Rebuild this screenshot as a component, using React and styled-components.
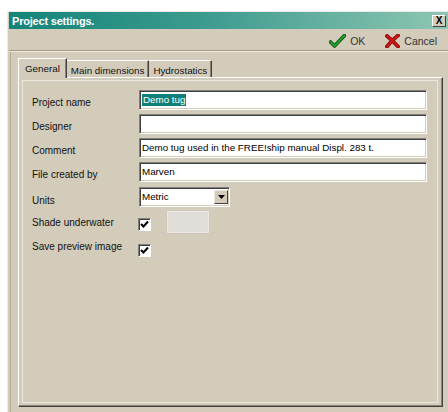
import React from "react";
import styled, { createGlobalStyle } from "styled-components";

const Global = createGlobalStyle`
  html, body {
    margin: 0;
    padding: 0;
    background: #ffffff;
    overflow: hidden;
  }
  body {
    font-family: "Liberation Sans", Arial, sans-serif;
    font-size: 10px;
    color: #000;
  }
`;

const Page = styled.div`
  width: 448px;
  height: 412px;
  padding: 11px 0 0 7px;
  box-sizing: border-box;
`;

const Window = styled.div`
  height: 401px;
  background: #d4ccbb;
  border-left: 1px solid #eeebe4;
  border-top: 1px solid #eeebe4;
  padding-left: 1px;
  display: flex;
  flex-direction: column;
  box-sizing: border-box;
`;

const TitleBar = styled.div`
  height: 17px;
  flex: none;
  display: flex;
  align-items: center;
  justify-content: space-between;
  background: linear-gradient(90deg, #138479 0%, #3d9b8f 45%, #8ec6b2 100%);
  padding: 0 2px 0 3px;
`;

const Title = styled.span`
  color: #fff;
  font-weight: bold;
  font-size: 11px;
  letter-spacing: -0.2px;
`;

const CloseBox = styled.div`
  width: 14px;
  height: 12px;
  background: #d4ccbb;
  border-top: 1px solid #fff;
  border-left: 1px solid #fff;
  border-right: 1px solid #404040;
  border-bottom: 1px solid #404040;
  box-sizing: border-box;
  display: flex;
  align-items: center;
  justify-content: center;
  font-weight: bold;
  font-size: 10px;
  line-height: 1;
`;

const Toolbar = styled.div`
  height: 22px;
  flex: none;
  display: flex;
  align-items: center;
  justify-content: flex-end;
  gap: 20px;
  padding-right: 11px;
  padding-top: 2px;
  box-sizing: border-box;
  border-bottom: 1px solid #a69c86;
  box-shadow: 0 1px 0 #eeebe4;
`;

const ToolButton = styled.div`
  display: flex;
  align-items: center;
  gap: 4px;
  font-size: 10.5px;
  color: #333;
`;

const Panel = styled.div`
  flex: 1;
  margin-top: 1px;
  margin-left: 1px;
  border-left: 1px solid #b7ab92;
  padding: 5px 0 0 7px;
  display: flex;
  flex-direction: column;
`;

const TabRow = styled.div`
  display: flex;
  align-items: flex-end;
  height: 20px;
  position: relative;
  z-index: 1;
`;

const Tab = styled.div`
  height: ${(p) => (p.$active ? "20px" : "17px")};
  padding: 0 ${(p) => (p.$active ? "6px" : "4px")};
  margin-bottom: ${(p) => (p.$active ? "-1px" : "0")};
  display: flex;
  align-items: center;
  box-sizing: border-box;
  background: #d4ccbb;
  border-top: 1px solid #fff;
  border-left: ${(p) => (p.$active ? "1px solid #fff" : "none")};
  border-right: 1px solid #404040;
  box-shadow: inset -1px 0 0 #8c8270;
  font-size: 9.8px;
  color: #111;
  padding-top: ${(p) => (p.$active ? "0" : "2px")};
`;

const Sheet = styled.div`
  width: 425px;
  height: 330px;
  box-sizing: border-box;
  border-top: 1px solid #fff;
  border-left: 1px solid #fff;
  border-right: 1px solid #404040;
  border-bottom: 1px solid #404040;
  box-shadow: inset -1px -1px 0 #8c8270;
  padding: 2px 4px 3px 3px;
`;

const Content = styled.div`
  height: 100%;
  box-sizing: border-box;
  border: 1px solid #ebe7df;
  padding: 9px 9px 0 9px;
`;

const Form = styled.div`
  display: grid;
  grid-template-columns: 107px 288px;
  row-gap: 4px;
`;

const Label = styled.div`
  padding-top: ${(p) => p.$top || 7}px;
  font-size: 10px;
  line-height: 12px;
  color: #111;
  white-space: nowrap;
`;

const Field = styled.div`
  height: 20px;
  box-sizing: border-box;
  background: #fff;
  border-top: 1px solid #808080;
  border-left: 1px solid #808080;
  border-right: 1px solid #fff;
  border-bottom: 1px solid #fff;
  box-shadow: inset 1px 1px 0 #404040, inset -1px -1px 0 #d4ccbb;
  padding: 3px 0 0 2px;
  font-size: 9.8px;
  line-height: 12px;
  white-space: nowrap;
  overflow: hidden;
  width: ${(p) => p.$w || "100%"};
  margin-top: ${(p) => p.$mt || 0}px;
  display: flex;
  align-items: flex-start;
  justify-content: space-between;
`;

const Selected = styled.span`
  background: #107f77;
  color: #fff;
  padding: 0 1px;
`;

const DropButton = styled.div`
  width: 14px;
  height: 14px;
  margin-top: -1px;
  margin-right: 1px;
  background: #d4ccbb;
  border-top: 1px solid #ece9e2;
  border-left: 1px solid #ece9e2;
  border-right: 1px solid #404040;
  border-bottom: 1px solid #404040;
  box-sizing: border-box;
  display: flex;
  align-items: center;
  justify-content: center;
`;

const CheckRow = styled.div`
  display: flex;
  align-items: center;
  gap: 16px;
  height: ${(p) => p.$h || 20}px;
`;

const CheckBox = styled.div`
  width: 13px;
  height: 13px;
  box-sizing: border-box;
  background: #fff;
  border-top: 1px solid #808080;
  border-left: 1px solid #808080;
  border-right: 1px solid #fff;
  border-bottom: 1px solid #fff;
  box-shadow: inset 1px 1px 0 #404040;
  display: flex;
  align-items: center;
  justify-content: center;
  margin-left: -1px;
  margin-top: ${(p) => p.$mt || 0}px;
`;

const Swatch = styled.div`
  width: 42px;
  height: 22px;
  box-sizing: border-box;
  background: #e0ddd8;
  border: 1px solid #ece9e4;
  outline: 1px solid #cfc8ba;
`;

const Tick = () => (
  <svg width="9" height="9" viewBox="0 0 9 9">
    <path d="M1 4 L3.5 6.5 L8 1.5" stroke="#000" strokeWidth="2" fill="none" />
  </svg>
);

const OkIcon = () => (
  <svg width="17" height="14" viewBox="0 0 17 14">
    <path d="M1.5 8 L5.5 12 L15.5 1.5" stroke="#0d4e18" strokeWidth="3.6" fill="none" strokeLinejoin="round" strokeLinecap="round" />
    <path d="M1.5 8 L5.5 12 L15.5 1.5" stroke="#1fa12a" strokeWidth="2" fill="none" strokeLinejoin="round" strokeLinecap="round" />
  </svg>
);

const CancelIcon = () => (
  <svg width="15" height="14" viewBox="0 0 15 14">
    <path d="M2 2 Q7 6 13 12.5 M13 1.5 Q7 6 2 12.5" stroke="#7a0a0a" strokeWidth="3.8" fill="none" strokeLinecap="round" />
    <path d="M2 2 Q7 6 13 12.5 M13 1.5 Q7 6 2 12.5" stroke="#d21414" strokeWidth="2.2" fill="none" strokeLinecap="round" />
  </svg>
);

const Arrow = () => (
  <svg width="7" height="4" viewBox="0 0 7 4">
    <path d="M0 0 H7 L3.5 4 Z" fill="#000" />
  </svg>
);

export default function App() {
  return (
    <Page>
      <Global />
      <Window>
        <TitleBar>
          <Title>Project settings.</Title>
          <CloseBox>X</CloseBox>
        </TitleBar>
        <Toolbar>
          <ToolButton>
            <OkIcon />
            OK
          </ToolButton>
          <ToolButton>
            <CancelIcon />
            Cancel
          </ToolButton>
        </Toolbar>
        <Panel>
          <TabRow>
            <Tab $active>General</Tab>
            <Tab>Main dimensions</Tab>
            <Tab>Hydrostatics</Tab>
          </TabRow>
          <Sheet>
            <Content>
              <Form>
                <Label>Project name</Label>
                <Field>
                  <Selected>Demo tug</Selected>
                </Field>
                <Label>Designer</Label>
                <Field />
                <Label>Comment</Label>
                <Field>Demo tug used in the FREE!ship manual Displ. 283 t.</Field>
                <Label>File created by</Label>
                <Field>Marven</Field>
                <Label $top={9}>Units</Label>
                <Field $w="91px" $mt={1}>
                  Metric
                  <DropButton>
                    <Arrow />
                  </DropButton>
                </Field>
                <Label $top={6}>Shade underwater</Label>
                <CheckRow $h={22}>
                  <CheckBox $mt={4}>
                    <Tick />
                  </CheckBox>
                  <Swatch />
                </CheckRow>
                <Label $top={4}>Save preview image</Label>
                <CheckRow>
                  <CheckBox $mt={6}>
                    <Tick />
                  </CheckBox>
                </CheckRow>
              </Form>
            </Content>
          </Sheet>
        </Panel>
      </Window>
    </Page>
  );
}
